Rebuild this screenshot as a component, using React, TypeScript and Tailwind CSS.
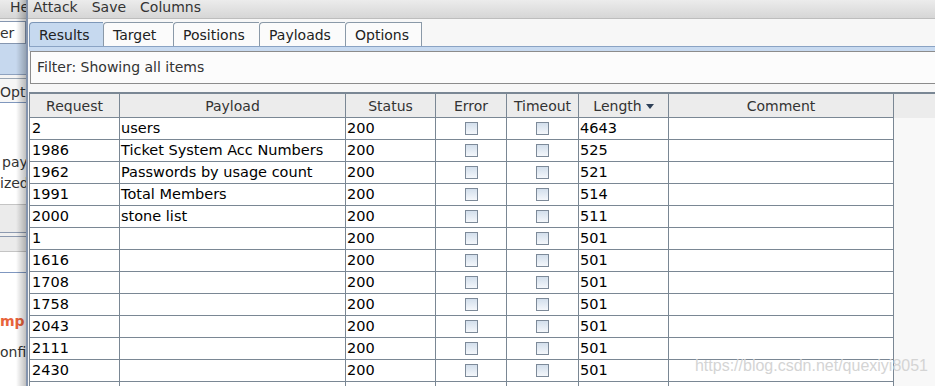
import React from "react";

const rows = [
  ["2", "users", "200", "4643"],
  ["1986", "Ticket System Acc Numbers", "200", "525"],
  ["1962", "Passwords by usage count", "200", "521"],
  ["1991", "Total Members", "200", "514"],
  ["2000", "stone list", "200", "511"],
  ["1", "", "200", "501"],
  ["1616", "", "200", "501"],
  ["1708", "", "200", "501"],
  ["1758", "", "200", "501"],
  ["2043", "", "200", "501"],
  ["2111", "", "200", "501"],
  ["2430", "", "200", "501"],
];

const tabs = [
  { label: "Results", w: "w-[74px]", active: true },
  { label: "Target", w: "w-[70px]", active: false },
  { label: "Positions", w: "w-[86px]", active: false },
  { label: "Payloads", w: "w-[86px]", active: false },
  { label: "Options", w: "w-[77px]", active: false },
];

const cols = "grid grid-cols-[90px_226px_90px_71px_72px_90px_225px]";

function Checkbox() {
  return (
    <div className="h-[13px] w-[13px] border border-[#7d8a99] bg-gradient-to-b from-[#d3dfec] to-[#f4f7fb]" />
  );
}

function BackWindow() {
  // the main Burp window peeking out behind the Intruder window
  return (
    <div className="relative w-[26px] shrink-0 overflow-hidden bg-white text-[14px] text-[#333]">
      <div className="h-[18px] bg-gradient-to-b from-[#ececec] to-[#d6d6d6] pl-[10px] leading-[14px] whitespace-nowrap">
        He
      </div>
      <div className="h-[3px] border-t border-[#bdbdbd] bg-[#f4f4f4]" />
      <div className="flex h-[23px] items-center border-y border-r border-[#8596b0] bg-white leading-[14px] whitespace-nowrap">
        er
      </div>
      <div className="h-[31px] border-b border-[#8ea2bf] bg-[#c6d8ee]" />
      <div className="h-[4px] border-b border-[#9aa6b4] bg-[#f4f4f4]" />
      <div className="flex h-[24px] items-center border-b border-[#7f97bd] bg-[#f6f6f6] pt-[2px] leading-[14px] whitespace-nowrap">
        Opti
      </div>
      <div className="h-[101px] bg-white pt-[49px] leading-[21px] whitespace-nowrap">
        <div className="pl-[2px]">pay</div>
        <div>ized</div>
      </div>
      <div className="h-[28px] border-t border-[#c4c4c4] bg-[#ebebeb]" />
      <div className="h-[5px] border-y border-[#8d9ab0] bg-[#f0f0f0]" />
      <div className="h-[15px] border-b border-[#c4c4c4] bg-[#ebebeb]" />
      <div className="h-[21px] border-b border-[#7f97c0] bg-white" />
      <div className="bg-white pt-[33px] leading-[31px] whitespace-nowrap">
        <div className="font-bold text-[#e8633b]">mp</div>
        <div>onfig</div>
      </div>
      <div className="absolute inset-y-0 right-0 w-[10px] bg-gradient-to-r from-transparent to-black/25" />
    </div>
  );
}

export default function App() {
  return (
    <div className="relative flex h-[386px] w-[935px] overflow-hidden bg-white font-['DejaVu_Sans',sans-serif]">
      <BackWindow />

      {/* Intruder attack window */}
      <div className="flex min-w-0 flex-1 flex-col overflow-hidden border-l-2 border-[#8393ad] bg-[#f7f7f7]">
        {/* Menu bar */}
        <div className="flex h-[19px] shrink-0 gap-[14px] border-b border-[#bdbdbd] bg-gradient-to-b from-[#ececec] to-[#d6d6d6] pl-[5px] text-[14px] leading-[14px] text-[#333]">
          <span>Attack</span>
          <span>Save</span>
          <span>Columns</span>
        </div>

        <div className="flex shrink-0 flex-col pl-[1px] pt-[3px]">
          {/* Tabs */}
          <div className="flex h-[24px] shrink-0">
            {tabs.map((t, i) => (
              <div
                key={t.label}
                className={`flex ${t.w} items-center rounded-tl-[4px] border-t border-l pt-[1px] pl-[9px] text-[14px] text-[#222] ${
                  i === tabs.length - 1 ? "border-r" : ""
                } ${t.active ? "border-[#7d97b8] bg-[#c6d9ef]" : "border-[#8a99a8] bg-[#fbfbfb]"}`}
              >
                {t.label}
              </div>
            ))}
          </div>
          <div className="h-[5px] shrink-0 border-t border-[#8aa3c4] bg-[#c8daf0]" />

          {/* Filter bar */}
          <div className="ml-[1px] flex h-[33px] shrink-0 items-center border border-r-0 border-[#8c8c8c] bg-[#fcfcfc] pl-[6px] text-[14px] text-[#333]">
            Filter: Showing all items
          </div>

          {/* Results table */}
          <div className="mt-[8px] flex shrink-0">
            <div className="border-t-2 border-l border-[#7a8794]">
              <div className={`${cols} h-[24px] bg-[#ececec] text-[14px] text-[#333]`}>
                {["Request", "Payload", "Status", "Error", "Timeout", "Length", "Comment"].map((h) => (
                  <div
                    key={h}
                    className="flex items-center justify-center gap-[4px] border-r border-b border-[#7a8794] pt-[1px]"
                  >
                    {h}
                    {h === "Length" && (
                      <svg width="8" height="5" viewBox="0 0 8 5" className="mt-[1px]">
                        <path d="M0 0 L8 0 L4 5 Z" fill="#2e4057" />
                      </svg>
                    )}
                  </div>
                ))}
              </div>
              {rows.map((r, i) => (
                <div key={i} className={`${cols} h-[22px] bg-white text-[14.5px] leading-[21px] text-black`}>
                  <div className="border-r border-b border-[#7a8794] pl-[2px]">{r[0]}</div>
                  <div className="border-r border-b border-[#7a8794] pl-[1px] whitespace-nowrap">{r[1]}</div>
                  <div className="border-r border-b border-[#7a8794] pl-[1px]">{r[2]}</div>
                  <div className="flex items-center justify-center border-r border-b border-[#7a8794]">
                    <Checkbox />
                  </div>
                  <div className="flex items-center justify-center border-r border-b border-[#7a8794]">
                    <Checkbox />
                  </div>
                  <div className="border-r border-b border-[#7a8794] pl-[1px]">{r[3]}</div>
                  <div className="border-r border-b border-[#7a8794]" />
                </div>
              ))}
              <div className={`${cols} h-[22px] bg-white`}>
                {Array.from({ length: 7 }).map((_, k) => (
                  <div key={k} className="border-r border-b border-[#7a8794]" />
                ))}
              </div>
            </div>
            <div className="flex flex-1 flex-col">
              <div className="h-[26px] border-t-2 border-[#7a8794] bg-[#ececec]" />
              <div className="flex-1 bg-[#f8f8f8]" />
            </div>
          </div>
        </div>
      </div>

      {/* blog watermark */}
      <div className="absolute right-[7px] bottom-[8px] font-['Liberation_Sans',sans-serif] text-[16px] text-[#d4d4d4]">
        https://blog.csdn.net/quexiyi8051
      </div>
    </div>
  );
}
